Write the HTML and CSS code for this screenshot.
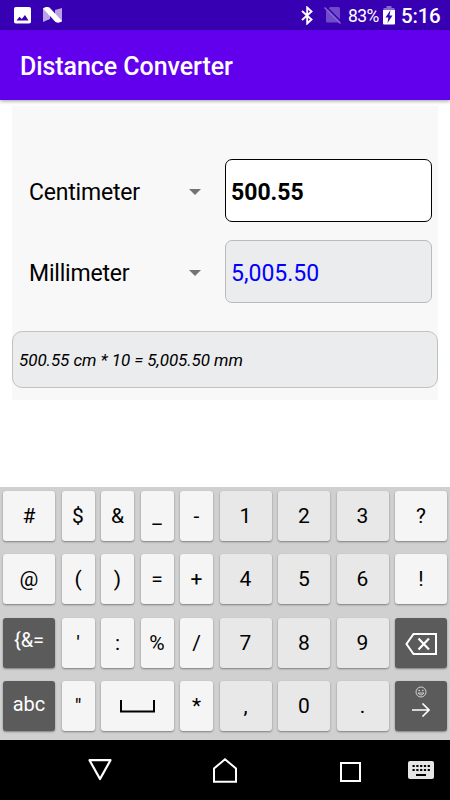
FILE: index.html
```html
<!DOCTYPE html>
<html lang="en">
<head>
    <meta charset="utf-8">
    <title>Distance Converter</title>
    <meta name="viewport" content="width=device-width, initial-scale=1.0">
    <link rel="stylesheet" href="styles.css">
</head>
<body>
    <div class="status-bar">
        <svg class="icon-image" width="17" height="17" viewBox="0 0 17 17"><rect width="17" height="16.5" rx="1.8" fill="#fff"/><path d="M2.500 13.500L5.500 9.800L7.800 12L11 8L14.500 13.500Z" fill="#3700b3"/></svg>
        <svg class="icon-n" width="19" height="16" viewBox="0 0 19 16"><path d="M0 1L7 5V12L0 15ZM19 1V15L12 11V3Z" fill="#b9a3e5"/><path d="M0 1.500Q3 -1 6.500 .5L19 14Q16 17 12.500 15Z" fill="#fff"/></svg>
        <div class="status-right">
            <svg width="12" height="19" viewBox="0 0 12 19"><path d="M1 5L10.500 13.500L6.200 17.500V1.500L10.500 5.500L1 14" fill="none" stroke="#fff" stroke-width="1.9"/></svg>
            <svg class="icon-sim" width="18" height="18" viewBox="0 0 18 18"><path d="M6 1H14.500Q16 1 16 2.500V16.500H3Q2 16.500 2 15V5Z" fill="#704bc9"/><path d="M2 .5L18 16.500" stroke="#3700b3" stroke-width="1.5"/><path d="M.5 1.500L16.500 17.500" stroke="#8667d0" stroke-width="1.5"/></svg>
            <span class="percent">83%</span>
            <svg class="icon-battery" width="12" height="19" viewBox="0 0 12 19"><path d="M3.500 0H8.500V2H11.500V5H.5V2H3.500Z" fill="#8768d0"/><path d="M0 4H12V17.500Q12 18.500 11 18.500H1Q0 18.500 0 17.500Z" fill="#fff"/><path d="M7.500 4L2.500 11.500H5.400L4.500 17L9.500 9.500H6.500Z" fill="#3700b3"/></svg>
            <span class="clock">5:16</span>
        </div>
    </div>
    <div class="app-bar">
        <h1>Distance Converter</h1>
    </div>

    <div class="content">
        <div class="card">
            <div class="unit-row">
                <div class="spinner"><span>Centimeter</span><i class="arrow"></i></div>
                <div class="value input">500.55</div>
            </div>
            <div class="unit-row">
                <div class="spinner"><span>Millimeter</span><i class="arrow"></i></div>
                <div class="value output">5,005.50</div>
            </div>
            <div class="formula"><span>500.55 cm * 10 = 5,005.50 mm</span></div>
        </div>
    </div>

    <div class="keyboard">
        <div class="key">#</div>
        <div class="key">$</div>
        <div class="key">&amp;</div>
        <div class="key">_</div>
        <div class="key">-</div>
        <div class="key num">1</div>
        <div class="key num">2</div>
        <div class="key num">3</div>
        <div class="key">?</div>

        <div class="key">@</div>
        <div class="key">(</div>
        <div class="key">)</div>
        <div class="key">=</div>
        <div class="key">+</div>
        <div class="key num">4</div>
        <div class="key num">5</div>
        <div class="key num">6</div>
        <div class="key">!</div>

        <div class="key dark">{&amp;=</div>
        <div class="key">'</div>
        <div class="key">:</div>
        <div class="key">%</div>
        <div class="key">/</div>
        <div class="key num">7</div>
        <div class="key num">8</div>
        <div class="key num">9</div>
        <div class="key dark icon">
            <svg width="32" height="22" viewBox="0 0 32 22"><path d="M8.500 1H31V21H8.500L1.500 11Z" fill="none" stroke="#fff" stroke-width="2"/><path d="M13.500 5.500L24 16.500M24 5.500L13.500 16.500" stroke="#fff" stroke-width="2.2"/></svg>
        </div>

        <div class="key dark">abc</div>
        <div class="key">"</div>
        <div class="key space">
            <svg width="35" height="13" viewBox="0 0 35 13"><path d="M1 0V11.500H34V0" fill="none" stroke="#000" stroke-width="2"/></svg>
        </div>
        <div class="key">*</div>
        <div class="key num">,</div>
        <div class="key num">0</div>
        <div class="key num">.</div>
        <div class="key dark enter">
            <svg width="12" height="12" viewBox="0 0 12 12"><g fill="none" stroke="#ddd" stroke-width=".9"><circle cx="6" cy="6" r="5"/><path d="M3 7Q6 11 9 7Z"/></g><circle cx="4.200" cy="4.500" r=".8" fill="#ddd"/><circle cx="7.800" cy="4.500" r=".8" fill="#ddd"/></svg>
            <svg width="18" height="14" viewBox="0 0 18 14"><path d="M0 7H17M10.500 .5L17 7L10.500 13.500" fill="none" stroke="#fff" stroke-width="1.6"/></svg>
        </div>
    </div>

    <div class="nav-bar">
        <svg width="24" height="22" viewBox="0 0 24 22"><path d="M1.500 1.200H22.500L12 20Z" fill="none" stroke="#fff" stroke-width="2.200" stroke-linejoin="round"/></svg>
        <svg width="24" height="25" viewBox="0 0 24 25"><path d="M1 23.800V10.500L12 1.300L23 10.500V23.800Z" fill="none" stroke="#fff" stroke-width="2"/></svg>
        <svg width="21" height="20" viewBox="0 0 21 20"><rect x="1" y="1" width="19" height="18" fill="none" stroke="#fff" stroke-width="2"/></svg>
        <svg width="26" height="18" viewBox="0 0 26 18"><rect width="26" height="18" rx="2" fill="#e6e6e6"/><path d="M4.500 5H22M4.500 9H22" stroke="#000" stroke-width="2" stroke-dasharray="2.200 1.600"/><path d="M8 14H18" stroke="#000" stroke-width="2"/></svg>
    </div>
</body>
</html>
```
FILE: styles.css
```css
* {
    box-sizing: border-box;
}

body {
    margin: 0;
    height: 800px;
    display: flex;
    flex-direction: column;
    background-color: #fff;
    font-family: Roboto, sans-serif;
    color: #000;
    overflow: hidden;
}

svg {
    display: block;
    flex: none;
}

.status-bar {
    height: 30px;
    display: flex;
    align-items: center;
    padding: 0 11px 0 14px;
    background-color: #3700b3;
    color: #fff;
}

.icon-n {
    margin-left: 12px;
}

.status-right {
    display: flex;
    align-items: center;
    margin-left: auto;
}

.icon-sim {
    margin-left: 11px;
}

.percent {
    width: 32px;
    margin-left: 6px;
    padding-top: 1px;
    font-size: 17.5px;
    letter-spacing: -0.6px;
}

.icon-battery {
    margin-left: 3px;
}

.clock {
    width: 38px;
    margin-left: 6px;
    padding-top: 1px;
    font-size: 20.5px;
    font-weight: 500;
    letter-spacing: -0.2px;
}

.app-bar {
    height: 70px;
    display: flex;
    align-items: center;
    padding: 3px 20px 0;
    background-color: #6200ee;
    color: #fff;
    box-shadow: 0 1px 4px rgba(0,0,0,0.4);
    z-index: 1;
}

.app-bar h1 {
    margin: 0;
    font-size: 25px;
    font-weight: 500;
    letter-spacing: -0.07px;
}

.content {
    height: 387px;
    padding: 6px 12px 0;
}

.card {
    height: 294px;
    padding-top: 53px;
    background-color: #f8f8f8;
}

.unit-row {
    display: flex;
    height: 63px;
    margin-bottom: 18px;
    padding: 0 6px 0 17px;
}

.spinner {
    width: 196px;
    display: flex;
    align-items: center;
    justify-content: space-between;
    padding: 3px 24px 0 0;
    font-size: 23px;
    letter-spacing: -0.2px;
}

.arrow {
    border: 6px solid transparent;
    border-top-color: #737373;
    border-bottom: 0;
}

.value {
    flex: 1;
    display: flex;
    align-items: center;
    padding: 3px 5px 0;
    border: 1.4px solid #bbb;
    border-radius: 7px;
    font-size: 23px;
}

.input {
    background-color: #fff;
    border-color: #000;
    font-weight: 700;
}

.output {
    background-color: #ebecee;
    color: #0000ff;
}

.formula {
    height: 57px;
    margin-top: 28px;
    display: flex;
    align-items: center;
    padding: 0 6px;
    background-color: #ebecee;
    border: 1.5px solid #c2c2c2;
    border-radius: 10px;
    font-size: 17px;
    font-style: italic;
    letter-spacing: -0.06px;
}

.keyboard {
    height: 253px;
    display: grid;
    grid-template-columns: 52px repeat(4, 33px) repeat(4, 52px);
    grid-template-rows: repeat(4, 50px);
    gap: 13.4px 6.5px;
    padding: 4px 3px;
    background-color: #d0d0d0;
}

.key {
    display: flex;
    align-items: center;
    justify-content: center;
    background-color: #f5f5f5;
    border-radius: 3px;
    box-shadow: 0 1px 2px rgba(0,0,0,0.4);
    font-size: 21px;
}

.num {
    background-color: #e8e8e8;
}

.dark {
    padding-bottom: 5px;
    background-color: #5b5b5b;
    color: #fff;
    font-size: 20px;
}

.icon {
    padding: 2px 0 0;
}

.space {
    grid-column: span 2;
}

.enter {
    flex-direction: column;
    justify-content: flex-start;
    gap: 5px;
    padding-top: 5px;
}

.nav-bar {
    height: 60px;
    display: flex;
    align-items: center;
    padding: 0 16px 0 88px;
    background-color: #000;
}

.nav-bar svg:nth-child(2) {
    margin-left: 101px;
}

.nav-bar svg:nth-child(3) {
    margin-left: 103px;
    margin-top: 3px;
}

.nav-bar svg:nth-child(4) {
    margin-left: auto;
}
```
